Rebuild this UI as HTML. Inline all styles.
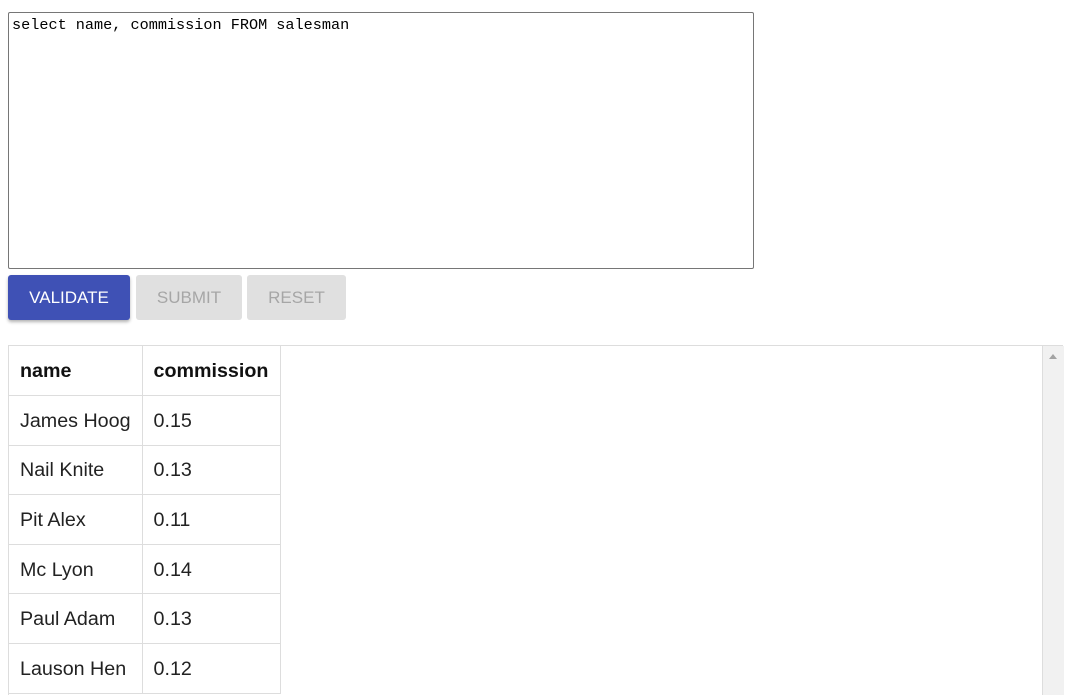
<!DOCTYPE html>
<html style="overflow:hidden"><head><style>
body{margin:0;background:#fff;font-family:"Liberation Sans",Arial,sans-serif;width:1071px;height:695px;overflow:hidden;position:relative}
.ta{position:absolute;left:8px;top:12px;width:746px;height:257px;border:1px solid #767676;border-radius:2px;box-sizing:border-box;font-family:"Liberation Mono",monospace;font-size:15.2px;padding:3px 3px;color:#000;white-space:nowrap}
.btn{position:absolute;top:275px;height:45px;border-radius:3px;font-size:17px;display:flex;align-items:center;justify-content:center}
.v{left:8px;width:122px;background:#3f51b5;color:#fff;box-shadow:0 2px 3px rgba(0,0,0,.3)}
.s{left:136px;width:106px;background:#e0e0e0;color:#a6a6a6}
.r{left:247px;width:99px;background:#e0e0e0;color:#a6a6a6}
.box{position:absolute;left:8px;top:345px;width:1055px;height:350px;border:1px solid #ddd;border-bottom:none;box-sizing:border-box}
.sb{position:absolute;left:1042px;top:346px;width:21px;height:349px;background:#f1f1f1;border-left:1px solid #ddd}
.sb:after{content:"";position:absolute;left:6px;top:8px;border-left:4px solid transparent;border-right:4px solid transparent;border-bottom:5px solid #a3a3a3}
table{position:absolute;left:9px;top:346px;border-collapse:collapse;font-size:19.7px;color:#222;white-space:nowrap}
td,th{border:1px solid #ddd;height:49.6px;padding:2px 11px 0;text-align:left;box-sizing:border-box}
th{font-weight:bold;color:#111}
td:first-child,th:first-child{width:133px}
td:last-child,th:last-child{width:138px}
tr:first-child th{border-top:none}
tr th:first-child,tr td:first-child{border-left:none}
</style></head><body>
<div class="ta">select name, commission FROM salesman</div>
<div class="btn v">VALIDATE</div>
<div class="btn s">SUBMIT</div>
<div class="btn r">RESET</div>
<div class="box"></div>
<table>
<tr><th>name</th><th>commission</th></tr>
<tr><td>James Hoog</td><td>0.15</td></tr>
<tr><td>Nail Knite</td><td>0.13</td></tr>
<tr><td>Pit Alex</td><td>0.11</td></tr>
<tr><td>Mc Lyon</td><td>0.14</td></tr>
<tr><td>Paul Adam</td><td>0.13</td></tr>
<tr><td>Lauson Hen</td><td>0.12</td></tr>
</table>
<div class="sb"></div>
</body></html>
